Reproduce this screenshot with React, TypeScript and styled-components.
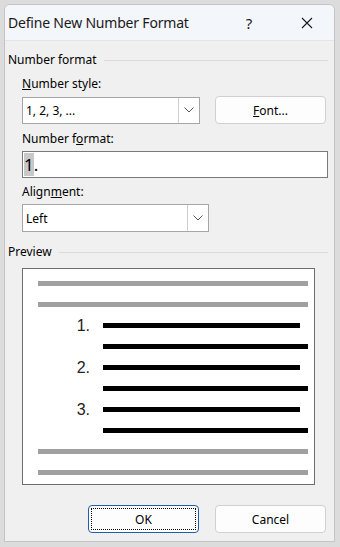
import React from "react";
import styled, { createGlobalStyle } from "styled-components";

const GlobalStyle = createGlobalStyle`
  html, body {
    margin: 0;
    padding: 0;
    background: #dcdcdc;
  }
  body {
    font-family: "Noto Sans", "Open Sans", sans-serif;
    font-size: 12px;
    color: #000;
  }
`;

export default function App() {
  const items = ["1.", "2.", "3."];

  return (
    <Page>
      <GlobalStyle />
      <Dialog>
        <TitleBar>
          <Title>Define New Number Format</Title>
          <TitleButton>?</TitleButton>
          <CloseButton>
            <svg width="12" height="12" viewBox="0 0 12 12">
              <path d="M1 1 L11 11 M11 1 L1 11" stroke="#1a1a1a" strokeWidth="1.1" fill="none" />
            </svg>
          </CloseButton>
        </TitleBar>

        <Body>
          <GroupHeader>Number format</GroupHeader>
          <Indent>
            <Label>
              <u>N</u>umber style:
            </Label>
            <FieldRow>
              <Combo $width={178} $height={27}>
                <ComboText>1, 2, 3, ...</ComboText>
                <DropButton>
                  <Chevron />
                </DropButton>
              </Combo>
              <Button $width={111}>
                <u>F</u>ont...
              </Button>
            </FieldRow>

            <Label $top={7}>
              Number f<u>o</u>rmat:
            </Label>
            <TextBox>
              <Selected>1</Selected>.
            </TextBox>

            <Label $top={6}>
              Align<u>m</u>ent:
            </Label>
            <Combo $width={187} $height={28}>
              <ComboText>Left</ComboText>
              <DropButton>
                <Chevron />
              </DropButton>
            </Combo>
          </Indent>

          <GroupHeader $top={12}>Preview</GroupHeader>
          <PreviewBox>
            <Bar $tone="gray" />
            <Bar $tone="gray" />
            {items.map((n) => (
              <React.Fragment key={n}>
                <ItemRow>
                  <Num>{n}</Num>
                  <Bar $tone="black" $short />
                </ItemRow>
                <ItemRow>
                  <span />
                  <Bar $tone="black" />
                </ItemRow>
              </React.Fragment>
            ))}
            <Bar $tone="gray" />
            <Bar $tone="gray" />
          </PreviewBox>

          <Footer>
            <Button $width={111} $primary>
              <FocusRing>OK</FocusRing>
            </Button>
            <Button $width={111}>Cancel</Button>
          </Footer>
        </Body>
      </Dialog>
    </Page>
  );
}

function Chevron() {
  return (
    <svg width="10" height="6" viewBox="0 0 10 6">
      <polyline points="0.5,0.5 5,5 9.5,0.5" stroke="#555" strokeWidth="1" fill="none" />
    </svg>
  );
}

const Page = styled.div`
  padding: 4px 5px 5px 4px;
  height: 547px;
  box-sizing: border-box;
`;

const Dialog = styled.div`
  width: 331px;
  height: 538px;
  box-sizing: border-box;
  background: #f0f0f0;
  border: 1px solid #c4c4c4;
  border-radius: 6px 6px 0 0;
  display: flex;
  flex-direction: column;
  overflow: hidden;
`;

const TitleBar = styled.div`
  height: 35px;
  display: flex;
  align-items: center;
  background: #f3f6fa;
  border-bottom: 1px solid #e4e4e4;
  padding-left: 3px;
`;

const Title = styled.div`
  flex: 1;
  font-size: 14px;
  letter-spacing: -0.2px;
  color: #1a1a1a;
`;

const TitleButton = styled.div`
  width: 22px;
  font-size: 15px;
  color: #1a1a1a;
  text-align: center;
  margin-right: 40px;
`;

const CloseButton = styled.div`
  width: 14px;
  display: flex;
  justify-content: center;
  margin-right: 20px;
`;

const Body = styled.div`
  flex: 1;
  display: flex;
  flex-direction: column;
  padding: 0 6px 0 3px;
`;

const GroupHeader = styled.div<{ $top?: number }>`
  display: flex;
  align-items: center;
  height: 16px;
  margin-top: ${(p) => p.$top ?? 11}px;
  line-height: 16px;

  &::after {
    content: "";
    flex: 1;
    height: 1px;
    background: #dadada;
    margin-left: 7px;
  }
`;

const Indent = styled.div`
  display: flex;
  flex-direction: column;
  padding-left: 14px;
`;

const Label = styled.div<{ $top?: number }>`
  height: 16px;
  line-height: 16px;
  margin-top: ${(p) => p.$top ?? 8}px;
  margin-bottom: 4px;
`;

const FieldRow = styled.div`
  display: flex;
  align-items: center;
  gap: 15px;
`;

const Combo = styled.div<{ $width: number; $height: number }>`
  width: ${(p) => p.$width}px;
  height: ${(p) => p.$height}px;
  box-sizing: border-box;
  display: flex;
  background: #fff;
  border: 1px solid #a6a6a6;
`;

const ComboText = styled.div`
  flex: 1;
  display: flex;
  align-items: center;
  padding-left: 3px;
`;

const DropButton = styled.div`
  width: 20px;
  display: flex;
  align-items: center;
  justify-content: center;
  border-left: 1px solid #cfcfcf;
`;

const TextBox = styled.div`
  height: 27px;
  box-sizing: border-box;
  background: #fff;
  border: 1px solid #7a7a7a;
  display: flex;
  align-items: center;
  padding-left: 1px;
  font-size: 17px;
`;

const Selected = styled.span`
  background: #c8c8c8;
`;

const Button = styled.div<{ $width: number; $primary?: boolean }>`
  width: ${(p) => p.$width}px;
  height: 28px;
  box-sizing: border-box;
  display: flex;
  align-items: center;
  justify-content: center;
  background: #fdfdfd;
  border: 1px solid ${(p) => (p.$primary ? "#1f5ea8" : "#d0d0d0")};
  border-radius: 4px;
  padding: 2px;
`;

const FocusRing = styled.div`
  flex: 1;
  align-self: stretch;
  display: flex;
  align-items: center;
  justify-content: center;
  border: 1px dotted #000;
`;

const PreviewBox = styled.div`
  margin: 8px 0 0 14px;
  width: 293px;
  height: 217px;
  box-sizing: border-box;
  background: #fff;
  border: 1px solid #6e6e6e;
  padding: 12px 6px 0 15px;
  display: flex;
  flex-direction: column;
  gap: 16px;
`;

const Bar = styled.div<{ $tone: "gray" | "black"; $short?: boolean }>`
  height: 5px;
  background: ${(p) => (p.$tone === "gray" ? "#a0a0a0" : "#000")};
  margin-right: ${(p) => (p.$short ? 8 : 0)}px;
`;

const ItemRow = styled.div`
  display: grid;
  grid-template-columns: 65px 1fr;
  height: 5px;
  align-items: center;
`;

const Num = styled.div`
  height: 5px;
  display: flex;
  align-items: center;
  justify-content: flex-end;
  padding-right: 13px;
  font-family: "Liberation Sans", Arial, sans-serif;
  font-size: 16px;
  color: #222;
`;

const Footer = styled.div`
  display: flex;
  justify-content: flex-end;
  gap: 16px;
  margin-top: 20px;
  padding-right: 2px;
`;
